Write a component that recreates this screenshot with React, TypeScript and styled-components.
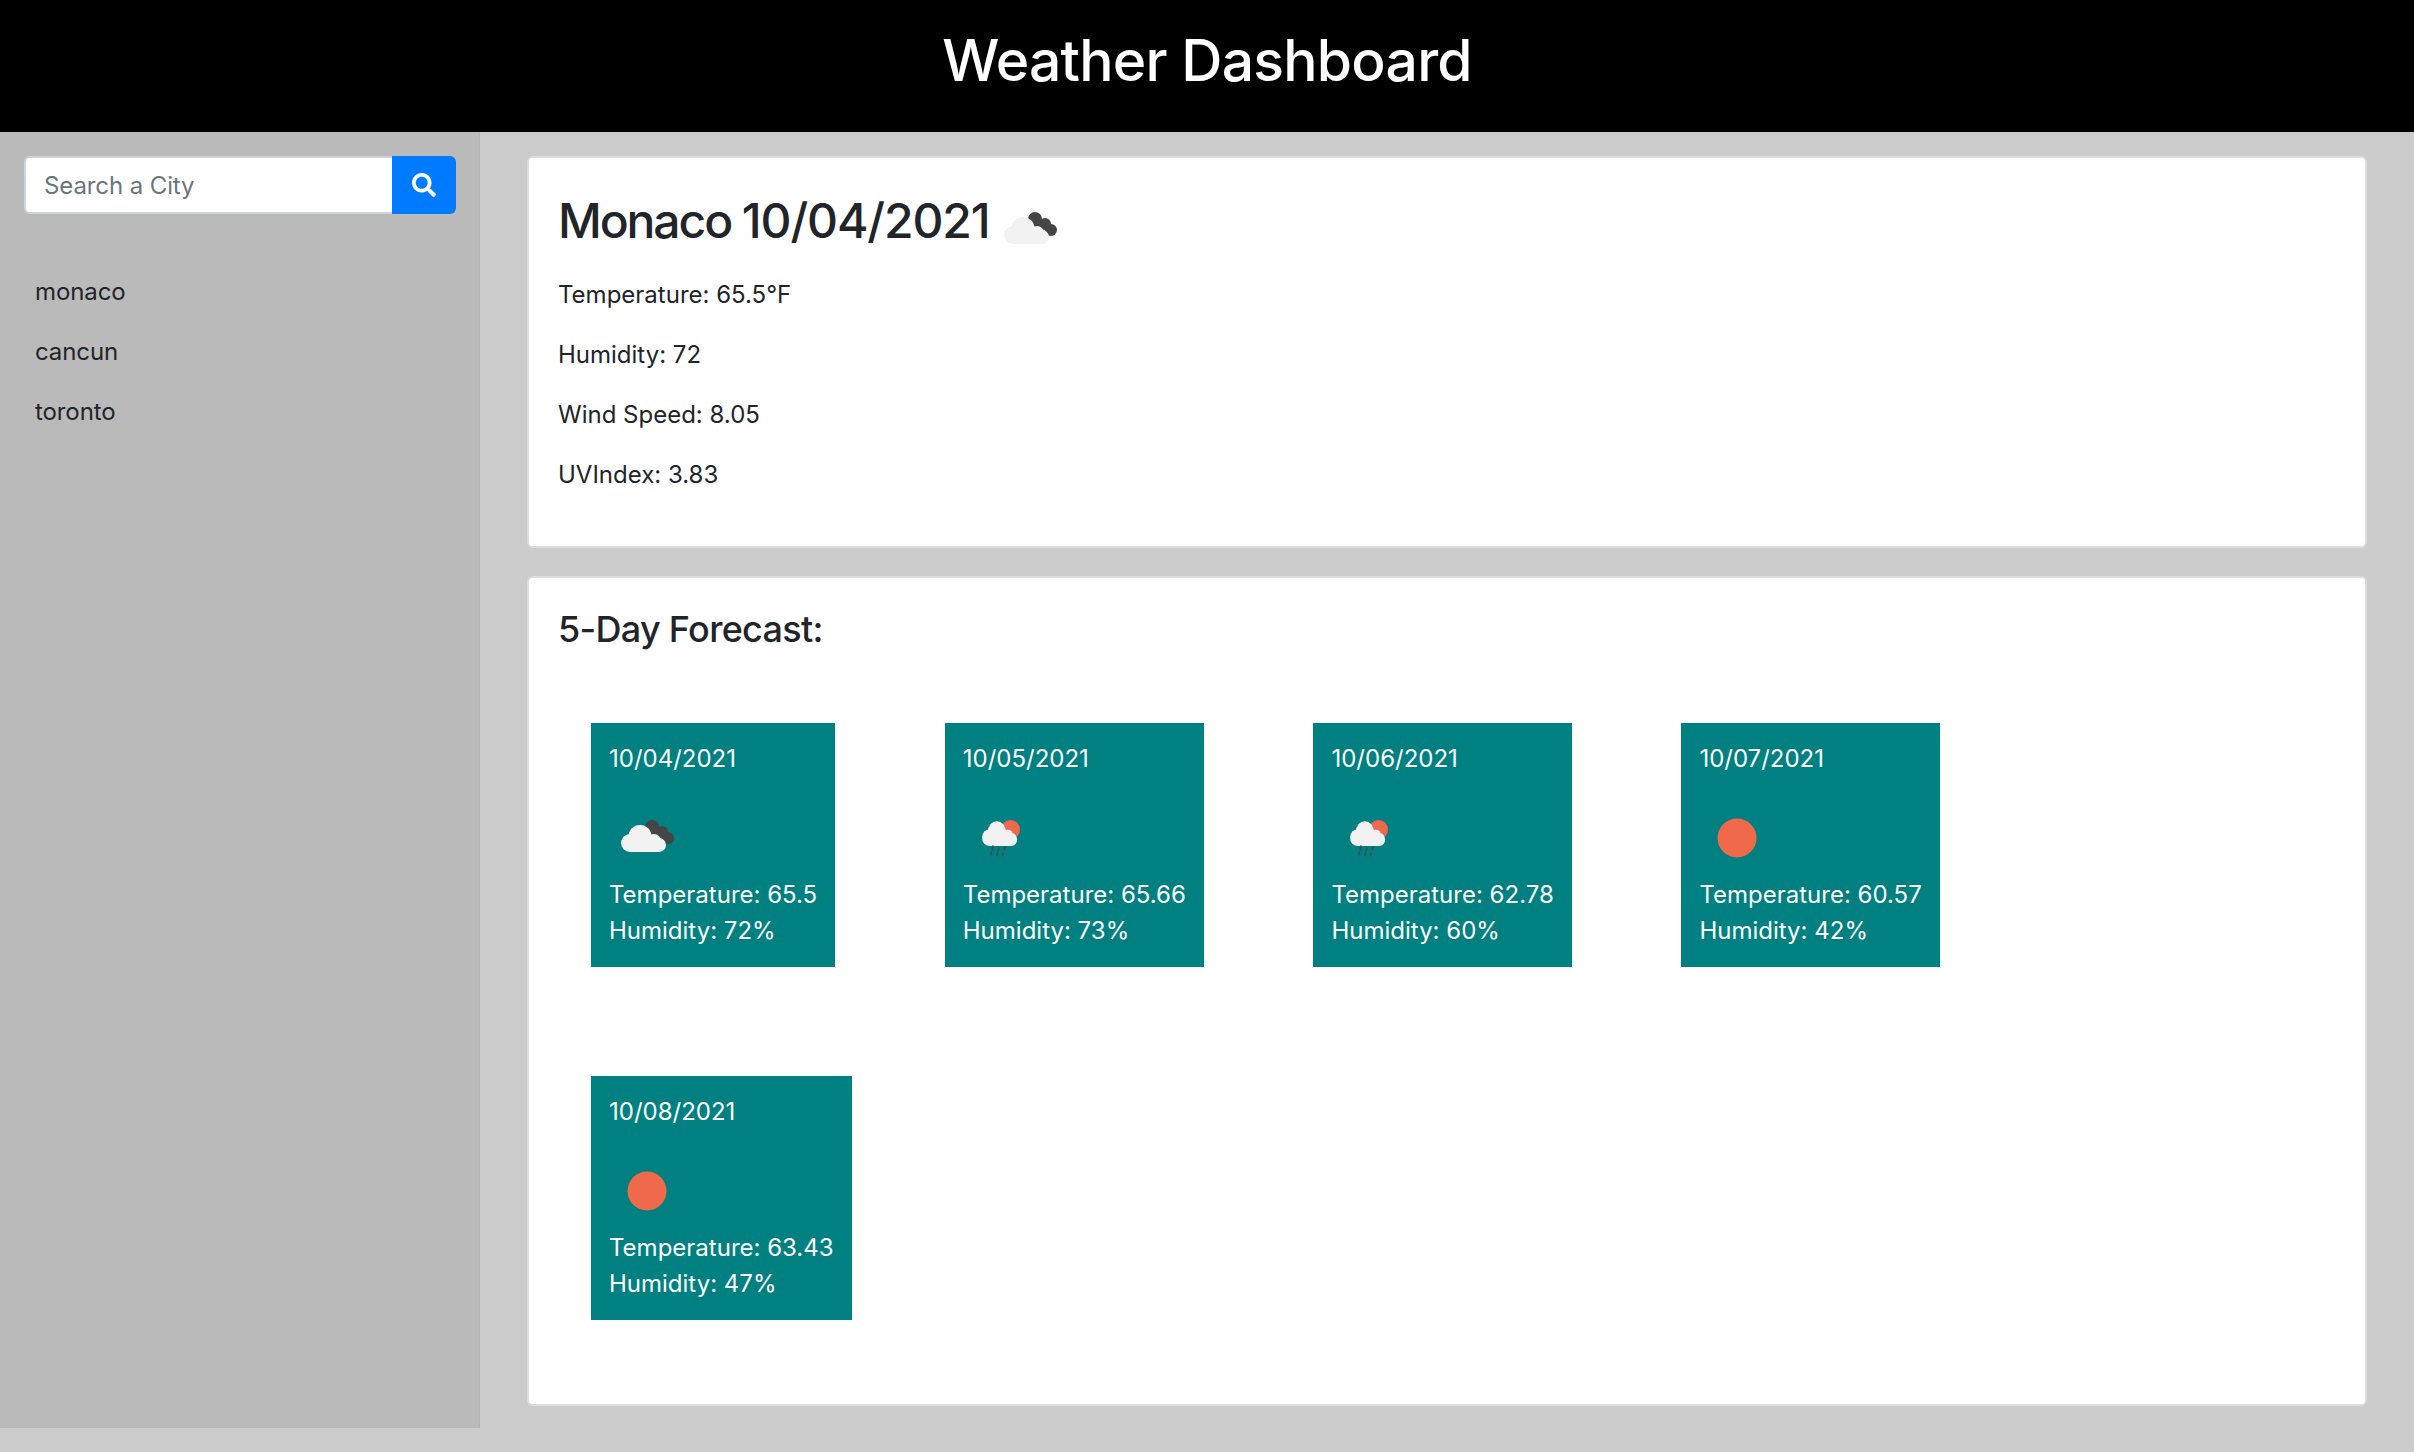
import React from "react";
import styled, { createGlobalStyle } from "styled-components";
import { FaSearch } from "react-icons/fa";

const GlobalStyle = createGlobalStyle`
  html, body {
    margin: 0;
    padding: 0;
    height: 100%;
    overflow: hidden;
    background: #cccccc;
    font-family: Inter, "Liberation Sans", sans-serif;
    color: #212529;
  }
  * { box-sizing: border-box; }
`;

const Header = styled.header`
  height: 132px;
  background: #000;
  display: flex;
  justify-content: center;
  padding-top: 25px;
`;

const Title = styled.h1`
  margin: 0;
  color: #fff;
  font-size: 57px;
  font-weight: 500;
  line-height: 72px;
  letter-spacing: -0.75px;
`;

const Body = styled.div`
  display: flex;
  align-items: flex-start;
`;

const Sidebar = styled.aside`
  width: 480px;
  height: 1296px;
  flex: none;
  background: #bababa;
  border-right: 1px solid #b4b4b4;
  padding: 24px;
`;

const SearchGroup = styled.form`
  display: flex;
  height: 58px;
  width: 432px;
`;

const SearchInput = styled.input`
  flex: 1;
  min-width: 0;
  border: 2px solid #ced4da;
  border-right: 0;
  border-radius: 6px 0 0 6px;
  padding: 0 18px;
  background: #fff;
  font: 400 24px Inter, "Liberation Sans", sans-serif;
  letter-spacing: -0.1px;
  outline: none;
  &::placeholder { color: #6c757d; opacity: 1; }
`;

const SearchButton = styled.button`
  width: 64px;
  border: 0;
  border-radius: 0 6px 6px 0;
  background: #007bff;
  color: #fff;
  padding: 0;
  display: flex;
  align-items: center;
  justify-content: center;
  font-size: 24px;
`;

const CityList = styled.ul`
  list-style: none;
  margin: 48px 0 0;
  padding: 0 11px;
`;

const City = styled.li`
  height: 60px;
  line-height: 60px;
  font-size: 24px;
  letter-spacing: -0.1px;
`;

const Main = styled.main`
  flex: 1;
  min-width: 0;
  padding: 24px 47px 0;
  display: flex;
  flex-direction: column;
  gap: 28px;
`;

const Card = styled.section<{ $height: number }>`
  height: ${(p) => p.$height}px;
  background: #fff;
  border: 2px solid #dedede;
  border-radius: 6px;
  padding: 30px 29px;
`;

const CityHeading = styled.h2`
  margin: 4px 0 27px;
  font-size: 48px;
  font-weight: 500;
  line-height: 58px;
  letter-spacing: -1.1px;
  display: flex;
  align-items: center;
  white-space: pre;
`;

const CityName = styled.span`
  letter-spacing: -2.1px;
`;

const HeadingIcon = styled.span`
  display: flex;
  margin: -30px 0 -10px 2px;
`;

const Stat = styled.p`
  margin: 0 0 24px;
  font-size: 24px;
  line-height: 36px;
  color: #212529;
`;

const ForecastHeading = styled.h3`
  margin: -1px 0 0;
  font-size: 36px;
  font-weight: 500;
  line-height: 44px;
  letter-spacing: -0.7px;
`;

const ForecastGrid = styled.div`
  display: flex;
  flex-wrap: wrap;
  column-gap: 109.6px;
  row-gap: 109px;
  margin-top: 72px;
  padding: 0 240px 0 33px;
`;

const ForecastCard = styled.article`
  background: #008080;
  color: #fff;
  height: 244px;
  padding: 18px 18px 0;
  font-size: 24px;
  line-height: 36px;
`;

const CardDate = styled.div`
  height: 36px;
`;

const IconSlot = styled.div`
  height: 100px;
`;

const CardLine = styled.div`
  white-space: nowrap;
`;

type Kind = "clouds" | "rain" | "sun";

const CloudShape = () => (
  <g fill="#f2f2f2">
    <circle cx="21" cy="66" r="9" />
    <circle cx="31" cy="59.5" r="11.5" />
    <circle cx="45" cy="64" r="7" />
    <circle cx="50" cy="68" r="7" />
    <rect x="21" y="64" width="29" height="11" />
  </g>
);

const WeatherIcon = ({ kind }: { kind: Kind }) => {
  if (kind === "sun") {
    return (
      <svg width="84" height="84" viewBox="0 0 84 84">
        <circle cx="38" cy="61" r="19.5" fill="#f0694a" />
      </svg>
    );
  }
  if (kind === "rain") {
    return (
      <svg width="84" height="84" viewBox="0 0 84 84">
        <circle cx="47.5" cy="52.5" r="9.5" fill="#f0694a" />
        <g transform="matrix(.78 0 0 .92 9.64 0)">
          <CloudShape />
        </g>
        <path
          d="M30 69l-1 4M28.5 75l-.8 3M36 71l-1 3M34.5 76l-.6 2.5M42 70l-.8 3M40 76l-.5 2"
          stroke="#4a4a4a"
          strokeWidth="1.5"
          strokeLinecap="round"
        />
      </svg>
    );
  }
  return (
    <svg width="84" height="84" viewBox="0 0 84 84">
      <g fill="#454545">
        <circle cx="43" cy="50" r="7" />
        <circle cx="53" cy="55" r="6" />
        <circle cx="59" cy="61" r="6" />
        <rect x="42" y="50" width="14" height="10" />
      </g>
      <CloudShape />
    </svg>
  );
};

const forecast: { date: string; temp: string; humidity: string; kind: Kind }[] = [
  { date: "10/04/2021", temp: "65.5", humidity: "72", kind: "clouds" },
  { date: "10/05/2021", temp: "65.66", humidity: "73", kind: "rain" },
  { date: "10/06/2021", temp: "62.78", humidity: "60", kind: "rain" },
  { date: "10/07/2021", temp: "60.57", humidity: "42", kind: "sun" },
  { date: "10/08/2021", temp: "63.43", humidity: "47", kind: "sun" },
];

const App = () => (
  <>
    <GlobalStyle />
    <Header>
      <Title>Weather Dashboard</Title>
    </Header>
    <Body>
      <Sidebar>
        <SearchGroup onSubmit={(e) => e.preventDefault()}>
          <SearchInput placeholder="Search a City" />
          <SearchButton type="submit" aria-label="Search">
            <FaSearch />
          </SearchButton>
        </SearchGroup>
        <CityList>
          <City>monaco</City>
          <City>cancun</City>
          <City>toronto</City>
        </CityList>
      </Sidebar>
      <Main>
        <Card $height={392}>
          <CityHeading>
            <CityName>Monaco </CityName>
            10/04/2021
            <HeadingIcon>
              <WeatherIcon kind="clouds" />
            </HeadingIcon>
          </CityHeading>
          <Stat>Temperature: 65.5°F</Stat>
          <Stat>Humidity: 72</Stat>
          <Stat>Wind Speed: 8.05</Stat>
          <Stat>UVIndex: 3.83</Stat>
        </Card>
        <Card $height={830}>
          <ForecastHeading>5-Day Forecast:</ForecastHeading>
          <ForecastGrid>
            {forecast.map((day) => (
              <ForecastCard key={day.date}>
                <CardDate>{day.date}</CardDate>
                <IconSlot>
                  <WeatherIcon kind={day.kind} />
                </IconSlot>
                <CardLine>Temperature: {day.temp}</CardLine>
                <CardLine>Humidity: {day.humidity}%</CardLine>
              </ForecastCard>
            ))}
          </ForecastGrid>
        </Card>
      </Main>
    </Body>
  </>
);

export default App;
